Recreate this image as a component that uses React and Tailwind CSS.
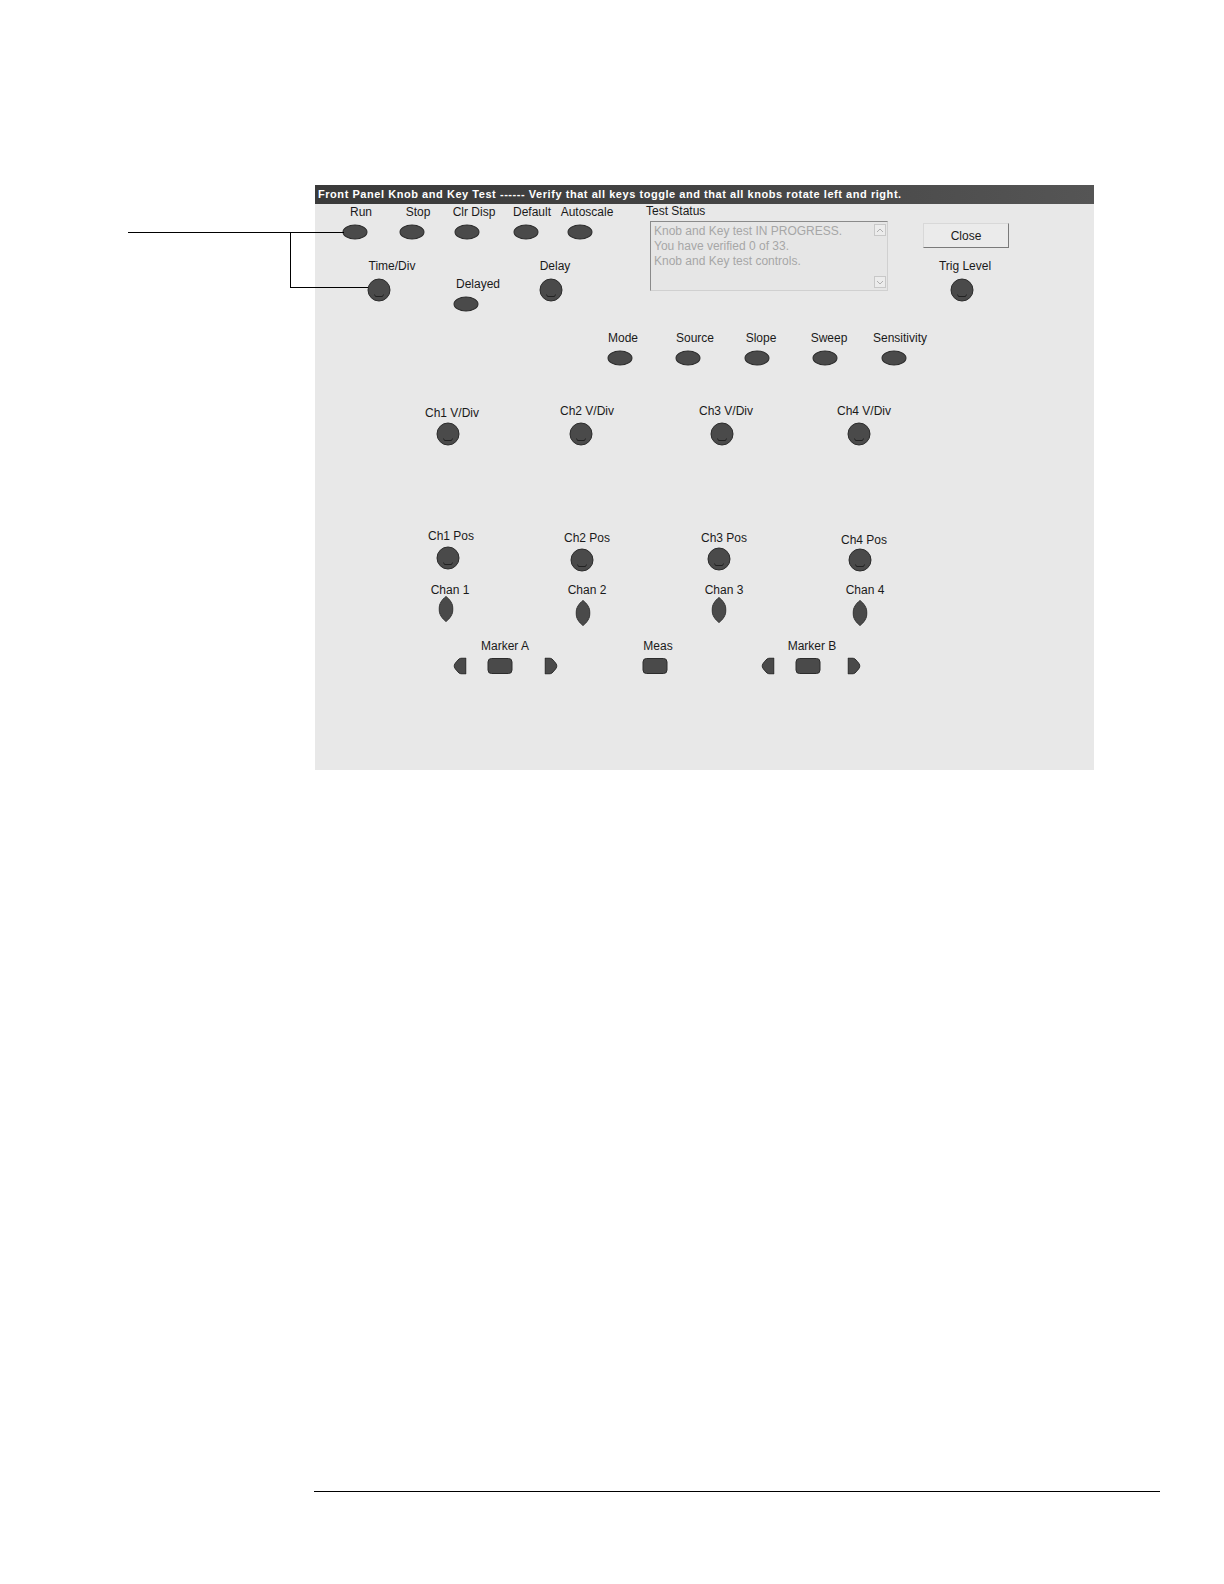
import React from "react";

const labels = [
  ["Run", 361, 212], ["Stop", 418, 212], ["Clr Disp", 474, 212], ["Default", 532, 212], ["Autoscale", 587, 212],
  ["Time/Div", 392, 266], ["Delayed", 478, 284], ["Delay", 555, 266], ["Trig Level", 965, 266],
  ["Mode", 623, 338], ["Source", 695, 338], ["Slope", 761, 338], ["Sweep", 829, 338], ["Sensitivity", 900, 338],
  ["Ch1 V/Div", 452, 413], ["Ch2 V/Div", 587, 411], ["Ch3 V/Div", 726, 411], ["Ch4 V/Div", 864, 411],
  ["Ch1 Pos", 451, 536], ["Ch2 Pos", 587, 538], ["Ch3 Pos", 724, 538], ["Ch4 Pos", 864, 540],
  ["Chan 1", 450, 590], ["Chan 2", 587, 590], ["Chan 3", 724, 590], ["Chan 4", 865, 590],
  ["Marker A", 505, 646], ["Meas", 658, 646], ["Marker B", 812, 646],
];

const ovals = [[355, 232], [412, 232], [467, 232], [526, 232], [580, 232], [466, 304], [620, 358], [688, 358], [757, 358], [825, 358], [894, 358]];
const knobs = [[379, 290], [551, 290], [962, 290], [448, 434], [581, 434], [722, 434], [859, 434], [448, 558], [582, 560], [719, 559], [860, 560]];
const leaves = [[446, 609], [583, 613], [719, 610], [860, 613]];
const rects = [[500, 666], [655, 666], [808, 666]];
const leftArrows = [[460, 666], [768, 666]];
const rightArrows = [[551, 666], [854, 666]];

// panel origin on the page
const OX = 315;
const OY = 185;
const at = (x, y) => ({ left: x - OX, top: y - OY });

function Knob() {
  return (
    <svg width="24" height="24" viewBox="0 0 24 24">
      <circle cx="12" cy="12" r="11" fill="#4a4a4a" stroke="#2c2c2c" strokeWidth="1" />
      <path d="M7.5 16.5 L8.5 18.5 H15.5 L16.5 16.5" fill="none" stroke="#222" strokeWidth="1" />
    </svg>
  );
}

function Leaf() {
  return (
    <svg width="15" height="26" viewBox="0 0 15 26">
      <path d="M7.5 0.5 C11.5 3.5 14.5 8 14.5 13 C14.5 18 11.5 22.5 7.5 25.5 C3.5 22.5 0.5 18 0.5 13 C0.5 8 3.5 3.5 7.5 0.5Z" fill="#4a4a4a" stroke="#333" strokeWidth="1" />
    </svg>
  );
}

function Arrow({ dir }) {
  const d = dir === "left"
    ? "M12.5 0.5 V16.5 H8 C5 16.5 0.5 10 0.5 8.5 C0.5 7 5 0.5 8 0.5Z"
    : "M0.5 0.5 V16.5 H5 C8 16.5 12.5 10 12.5 8.5 C12.5 7 8 0.5 5 0.5Z";
  return (
    <svg width="13" height="17" viewBox="0 0 13 17">
      <path d={d} fill="#4a4a4a" stroke="#2c2c2c" strokeWidth="1" />
    </svg>
  );
}

export default function App() {
  const font = { fontFamily: '"Liberation Sans", Arial, sans-serif' };
  return (
    <div className="relative w-full h-[1584px] bg-white" style={font}>
      <div className="pt-[185px] pl-[315px]">
        {/* Dialog */}
        <div className="relative w-[779px] h-[585px] bg-[#e8e8e8]">
          <div className="h-[19px] flex items-center pl-[3px] bg-gradient-to-r from-[#3a3a3a] via-[#444444] to-[#555555] text-white text-[11px] font-bold tracking-[0.55px] whitespace-nowrap">
            Front Panel Knob and Key Test ------ Verify that all keys toggle and that all knobs rotate left and right.
          </div>

          {labels.map(([t, x, y]) => (
            <div
              key={t}
              className="absolute -translate-x-1/2 -translate-y-1/2 text-[12px] leading-none text-[#1a1a1a] whitespace-nowrap"
              style={at(x, y)}
            >
              {t}
            </div>
          ))}

          {ovals.map(([x, y], i) => (
            <div key={"o" + i} className="absolute -translate-x-1/2 -translate-y-1/2 w-[25px] h-[15px] rounded-[50%] bg-[#4a4a4a] border border-[#2c2c2c]" style={at(x, y)} />
          ))}
          {knobs.map(([x, y], i) => (
            <div key={"k" + i} className="absolute -translate-x-1/2 -translate-y-1/2 flex" style={at(x, y)}>
              <Knob />
            </div>
          ))}
          {leaves.map(([x, y], i) => (
            <div key={"l" + i} className="absolute -translate-x-1/2 -translate-y-1/2 flex" style={at(x, y)}>
              <Leaf />
            </div>
          ))}
          {rects.map(([x, y], i) => (
            <div key={"r" + i} className="absolute -translate-x-1/2 -translate-y-1/2 w-[25px] h-[16px] rounded-[4px] bg-[#4a4a4a] border border-[#2c2c2c]" style={at(x, y)} />
          ))}
          {leftArrows.map(([x, y], i) => (
            <div key={"la" + i} className="absolute -translate-x-1/2 -translate-y-1/2 flex" style={at(x, y)}>
              <Arrow dir="left" />
            </div>
          ))}
          {rightArrows.map(([x, y], i) => (
            <div key={"ra" + i} className="absolute -translate-x-1/2 -translate-y-1/2 flex" style={at(x, y)}>
              <Arrow dir="right" />
            </div>
          ))}

          {/* Test Status */}
          <div className="absolute left-[331px] top-[20px] text-[12px] leading-none text-[#1a1a1a]">Test Status</div>
          <div className="absolute left-[335px] top-[36px] w-[238px] h-[70px] bg-[#e6e6e6] border border-t-[#8a8a8a] border-l-[#8a8a8a] border-r-[#d0d0d0] border-b-[#d0d0d0] flex">
            <div className="flex-1 pl-[3px] pt-[2px] text-[12px] leading-[15px] text-[#a6a6a6]">
              <div>Knob and Key test IN PROGRESS.</div>
              <div>You have verified 0 of 33.</div>
              <div>Knob and Key test controls.</div>
            </div>
            <div className="w-[14px] flex flex-col justify-between items-center py-[2px]">
              <div className="w-[12px] h-[12px] border border-[#c8c8c8] bg-[#ececec] flex items-center justify-center">
                <svg width="8" height="5" viewBox="0 0 8 5"><path d="M1 4 L4 1 L7 4" fill="none" stroke="#b0b0b0" strokeWidth="1" /></svg>
              </div>
              <div className="w-[12px] h-[12px] border border-[#c8c8c8] bg-[#ececec] flex items-center justify-center">
                <svg width="8" height="5" viewBox="0 0 8 5"><path d="M1 1 L4 4 L7 1" fill="none" stroke="#b0b0b0" strokeWidth="1" /></svg>
              </div>
            </div>
          </div>

          {/* Close */}
          <div className="absolute left-[608px] top-[38px] w-[86px] h-[25px] bg-[#ebebeb] border border-t-[#d8d8d8] border-l-[#d8d8d8] border-r-[#7a7a7a] border-b-[#7a7a7a] flex items-center justify-center text-[12px] text-[#1a1a1a]">
            Close
          </div>
        </div>
      </div>

      {/* Callout lines */}
      <div className="absolute left-[128px] top-[232px] w-[216px] h-px bg-black" />
      <div className="absolute left-[290px] top-[232px] w-px h-[56px] bg-black" />
      <div className="absolute left-[290px] top-[287px] w-[78px] h-px bg-black" />

      {/* Page footer rule */}
      <div className="absolute left-[314px] top-[1491px] w-[846px] h-px bg-black" />
    </div>
  );
}
